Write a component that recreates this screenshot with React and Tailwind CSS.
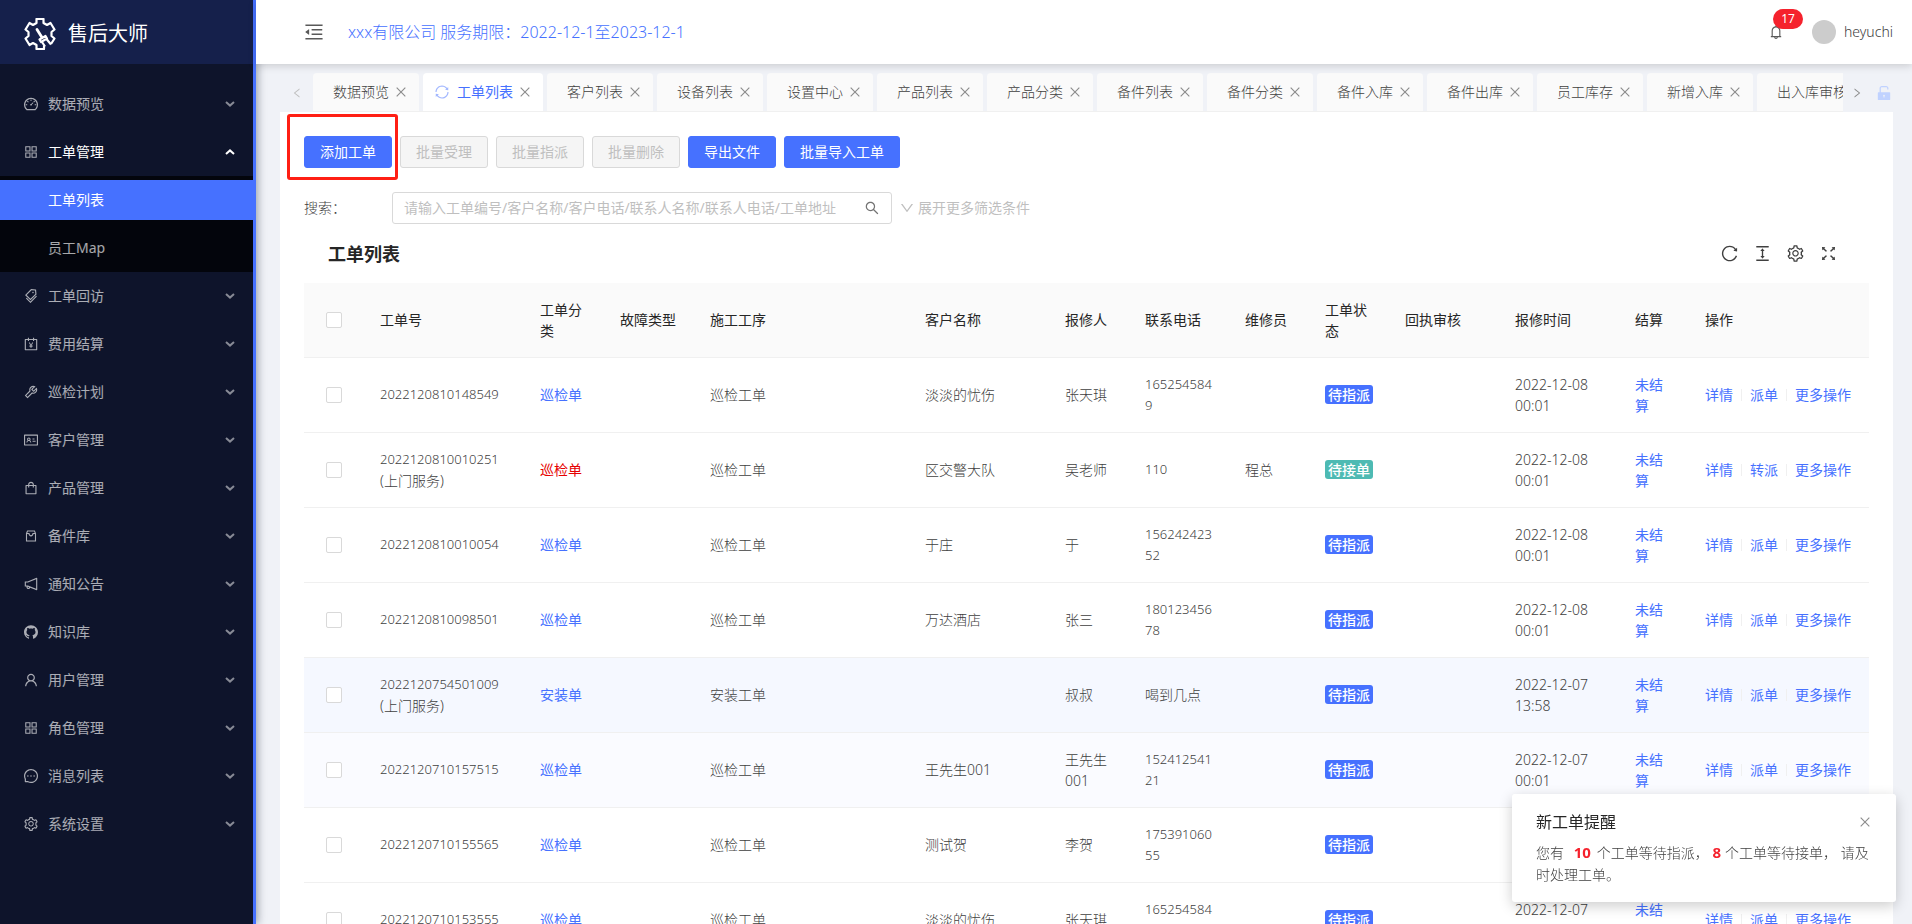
import {
  AiFillUnlock,
  AiOutlineAccountBook,
  AiOutlineAppstore,
  AiOutlineBell,
  AiOutlineClose,
  AiOutlineColumnHeight,
  AiOutlineDashboard,
  AiOutlineDown,
  AiOutlineFullscreen,
  AiOutlineGithub,
  AiOutlineIdcard,
  AiOutlineLeft,
  AiOutlineMenuFold,
  AiOutlineMessage,
  AiOutlineNotification,
  AiOutlineReload,
  AiOutlineRight,
  AiOutlineSearch,
  AiOutlineSetting,
  AiOutlineShopping,
  AiOutlineSync,
  AiOutlineTags,
  AiOutlineTool,
  AiOutlineUser,
} from "react-icons/ai";

function PartsIcon({ className }) {
  return (
    <svg
      viewBox="0 0 16 16"
      className={className}
      fill="none"
      stroke="currentColor"
      strokeWidth="1.1"
    >
      <path d="M3.5 5.5 L4.5 3 H11.5 L12.5 5.5 V13 H3.5 Z M3.5 5.5 H6 C6.3 8.6 9.7 8.6 10 5.5 H12.5" />
    </svg>
  );
}

const menus = [
  { label: "数据预览", Icon: AiOutlineDashboard },
  {
    label: "工单管理",
    Icon: AiOutlineAppstore,
    open: true,
    children: [{ label: "工单列表", active: true }, { label: "员工Map" }],
  },
  { label: "工单回访", Icon: AiOutlineTags },
  { label: "费用结算", Icon: AiOutlineAccountBook },
  { label: "巡检计划", Icon: AiOutlineTool },
  { label: "客户管理", Icon: AiOutlineIdcard },
  { label: "产品管理", Icon: AiOutlineShopping },
  { label: "备件库", Icon: PartsIcon },
  { label: "通知公告", Icon: AiOutlineNotification },
  { label: "知识库", Icon: AiOutlineGithub },
  { label: "用户管理", Icon: AiOutlineUser },
  { label: "角色管理", Icon: AiOutlineAppstore },
  { label: "消息列表", Icon: AiOutlineMessage },
  { label: "系统设置", Icon: AiOutlineSetting },
];

const tabs = [
  "数据预览",
  "工单列表",
  "客户列表",
  "设备列表",
  "设置中心",
  "产品列表",
  "产品分类",
  "备件列表",
  "备件分类",
  "备件入库",
  "备件出库",
  "员工库存",
  "新增入库",
  "出入库审核",
];

const actions = [
  { label: "添加工单", primary: true, marked: true },
  { label: "批量受理" },
  { label: "批量指派" },
  { label: "批量删除" },
  { label: "导出文件", primary: true },
  { label: "批量导入工单", primary: true },
];

const columns = [
  { title: "工单号", width: "w-[160px]" },
  { title: "工单分类", width: "w-[80px]" },
  { title: "故障类型", width: "w-[90px]" },
  { title: "施工工序", width: "" },
  { title: "客户名称", width: "w-[140px]" },
  { title: "报修人", width: "w-[80px]" },
  { title: "联系电话", width: "w-[100px]" },
  { title: "维修员", width: "w-[80px]" },
  { title: "工单状态", width: "w-[80px]" },
  { title: "回执审核", width: "w-[110px]" },
  { title: "报修时间", width: "w-[120px]" },
  { title: "结算", width: "w-[70px]" },
  { title: "操作", width: "w-[180px]" },
];

const orders = [
  {
    no: "2022120810148549",
    type: "巡检单",
    process: "巡检工单",
    customer: "淡淡的忧伤",
    reporter: "张天琪",
    phone: "1652545849",
    time: "2022-12-08 00:01",
  },
  {
    no: "2022120810010251",
    onSite: true,
    type: "巡检单",
    urgent: true,
    process: "巡检工单",
    customer: "区交警大队",
    reporter: "吴老师",
    phone: "110",
    worker: "程总",
    accepted: true,
    time: "2022-12-08 00:01",
  },
  {
    no: "2022120810010054",
    type: "巡检单",
    process: "巡检工单",
    customer: "于庄",
    reporter: "于",
    phone: "15624242352",
    time: "2022-12-08 00:01",
  },
  {
    no: "2022120810098501",
    type: "巡检单",
    process: "巡检工单",
    customer: "万达酒店",
    reporter: "张三",
    phone: "18012345678",
    time: "2022-12-08 00:01",
  },
  {
    no: "2022120754501009",
    onSite: true,
    type: "安装单",
    process: "安装工单",
    customer: "",
    reporter: "叔叔",
    phone: "喝到几点",
    time: "2022-12-07 13:58",
    rowClass: "bg-[#f5f8ff]",
  },
  {
    no: "2022120710157515",
    type: "巡检单",
    process: "巡检工单",
    customer: "王先生001",
    reporter: "王先生001",
    phone: "15241254121",
    time: "2022-12-07 00:01",
    rowClass: "bg-[#fafbff]",
  },
  {
    no: "2022120710155565",
    type: "巡检单",
    process: "巡检工单",
    customer: "测试贺",
    reporter: "李贺",
    phone: "17539106055",
    time: "2022-12-07 00:01",
  },
  {
    no: "2022120710153555",
    type: "巡检单",
    process: "巡检工单",
    customer: "淡淡的忧伤",
    reporter: "张天琪",
    phone: "1652545849",
    time: "2022-12-07 00:01",
  },
];

function Logo() {
  return (
    <svg
      viewBox="0 0 32 32"
      className="w-8 h-8"
      fill="none"
      stroke="white"
      strokeWidth="2.2"
      strokeLinejoin="round"
    >
      <path d="M20 27.5 V31 H12.5 V27 L9 25 L5.5 27 L1.5 20.5 L4.5 18 V14 L1.5 11.5 L5.5 5 L9 7 L12.5 5 V1 H19.5 V5 L23 7 L26.5 5 L30.5 11.5 L27.5 14 V18 L30.5 20.5 L27 26" />
      <path d="M13 11.5 L18 19.5" strokeWidth="2.8" strokeLinecap="round" />
      <path d="M15.5 21.5 L21.5 18 L23 20.5 L17 24 Z" />
      <path d="M22.5 21 L27 26.5 M18 24 L21 28.5" />
    </svg>
  );
}

function Chevron({ open }) {
  return (
    <svg
      viewBox="0 0 10 6"
      className={`w-2.5 h-1.5 ${open ? "text-white" : "text-white/50"}`}
      fill="none"
      stroke="currentColor"
      strokeWidth="2"
    >
      <path d={open ? "M1 5 L5 1.4 L9 5" : "M1 1 L5 4.6 L9 1"} />
    </svg>
  );
}

function Sidebar() {
  return (
    <aside className="relative z-10 w-64 shrink-0 bg-[#0e142b] border-r-[3px] border-[#4671ff] font-normal shadow-[2px_0_8px_rgba(0,21,41,0.35)]">
      <div className="flex items-center gap-3 h-16 pl-6 pt-1 bg-[#15204b]">
        <Logo />
        <span className="text-xl text-white">售后大师</span>
      </div>

      <nav className="pt-4 text-white/65">
        {menus.map(({ label, Icon, open, children }) => (
          <div key={label}>
            <button
              className={`flex items-center w-full h-12 pl-[23px] pr-[18px] ${open ? "text-white" : ""}`}
            >
              <Icon className="w-4 h-4 mr-[9px] text-white/65" />
              <span className="flex-1 text-left">{label}</span>
              <Chevron open={open} />
            </button>
            {children && (
              <div className="bg-[#03050c]">
                {children.map((child) => (
                  <div key={child.label} className="py-1">
                    <a
                      href="#"
                      className={`flex items-center h-10 pl-12 ${child.active ? "bg-[#4671ff] text-white" : ""}`}
                    >
                      {child.label}
                    </a>
                  </div>
                ))}
              </div>
            )}
          </div>
        ))}
      </nav>
    </aside>
  );
}

function Header() {
  return (
    <header className="relative z-20 flex items-center h-16 shrink-0 pl-[47px] pr-[19px] bg-white shadow-[0_2px_8px_rgba(0,0,0,0.16)]">
      <button aria-label="折叠菜单" className="text-[#595959]">
        <AiOutlineMenuFold className="w-[22px] h-[22px]" />
      </button>
      <div className="flex-1 ml-[23px] text-base text-[#4671ff]">
        xxx有限公司 服务期限：2022-12-1至2023-12-1
      </div>
      <button aria-label="通知" className="relative text-[#595959]">
        <AiOutlineBell className="w-4 h-4" />
        <span className="absolute -top-[15px] left-[5px] w-[30px] h-5 leading-5 text-center text-xs font-normal text-white bg-[#f5222d] rounded-full">
          17
        </span>
      </button>
      <span className="w-6 h-6 ml-7 mr-2 rounded-full bg-[#ccc]" />
      <span className="text-sm text-[#404040]">heyuchi</span>
    </header>
  );
}

function TabBar() {
  return (
    <div className="flex items-center pt-[9px]">
      <button
        aria-label="向左"
        className="flex justify-center w-[33px] shrink-0 text-[#bfbfbf]"
      >
        <AiOutlineLeft className="w-3 h-3" />
      </button>
      <div className="flex flex-1 gap-1 min-w-0 overflow-hidden border-b border-[#f0f0f0]">
        {tabs.map((tab) => {
          const active = tab === "工单列表";
          return (
            <div
              key={tab}
              className={`flex items-center shrink-0 h-[38px] pr-[11px] rounded-t-sm ${
                active
                  ? "pl-[11px] bg-white font-normal text-[#4671ff]"
                  : "pl-5 bg-[#fafafa]"
              }`}
            >
              {active && (
                <AiOutlineSync className="w-4 h-4 mr-[7px] text-[#a3b8ff]" />
              )}
              <button>{tab}</button>
              <button
                aria-label={`关闭${tab}`}
                className="ml-[5px] text-[#8c8c8c]"
              >
                <AiOutlineClose className="w-3.5 h-3.5" />
              </button>
            </div>
          );
        })}
      </div>
      <button
        aria-label="向右"
        className="flex justify-center w-7 shrink-0 text-[#8c8c8c]"
      >
        <AiOutlineRight className="w-3 h-3" />
      </button>
      <button
        aria-label="锁定"
        className="flex justify-end items-center w-[22px] h-9 shrink-0 text-[#c0d2ff]"
      >
        <AiFillUnlock className="w-[18px] h-[18px]" />
      </button>
    </div>
  );
}

function ActionBar() {
  return (
    <div className="flex gap-2 font-normal">
      {actions.map(({ label, primary, marked }) => (
        <div key={label} className="relative">
          <button
            disabled={!primary}
            className={`h-8 px-[15px] border rounded-[3px] ${
              primary
                ? "bg-[#4671ff] border-[#4671ff] text-white"
                : "bg-[#f5f5f5] border-[#d9d9d9] text-[#bfbfbf]"
            }`}
          >
            {label}
          </button>
          {marked && (
            <div className="absolute -left-[17px] -top-[22px] w-[111px] h-[66px] z-10 border-[3px] border-[#ff1f14] rounded-[3px] pointer-events-none" />
          )}
        </div>
      ))}
    </div>
  );
}

function SearchBar() {
  return (
    <div className="flex items-center mt-6">
      <label htmlFor="keyword" className="w-22">
        搜索：
      </label>
      <div className="flex items-center w-[500px] h-8 px-[11px] border border-[#d9d9d9] rounded-[3px]">
        <input
          id="keyword"
          type="text"
          placeholder="请输入工单编号/客户名称/客户电话/联系人名称/联系人电话/工单地址"
          className="flex-1 min-w-0 outline-none placeholder:font-normal placeholder:text-[#bfbfbf]"
        />
        <button aria-label="搜索" className="text-[#737373]">
          <AiOutlineSearch className="w-4 h-4" />
        </button>
      </div>
      <button className="flex items-center gap-[3px] ml-[7px] font-normal text-[#bfbfbf]">
        <AiOutlineDown className="w-4 h-4" />
        展开更多筛选条件
      </button>
    </div>
  );
}

function Checkbox({ label }) {
  return (
    <input
      type="checkbox"
      aria-label={label}
      className="block w-4 h-4 appearance-none bg-white border border-[#d9d9d9] rounded-[2px]"
    />
  );
}

function OrderRow({ order }) {
  return (
    <tr className={`h-[75px] border-b border-[#f0f0f0] ${order.rowClass || ""}`}>
      <td className="pl-[22px]">
        <Checkbox label={order.no} />
      </td>
      <td className="px-4">
        <div className="text-[13px]">{order.no}</div>
        {order.onSite && <div>(上门服务)</div>}
      </td>
      <td className="px-4 font-normal">
        <a
          href="#"
          className={order.urgent ? "text-[#e60000]" : "text-[#4671ff]"}
        >
          {order.type}
        </a>
      </td>
      <td className="px-4" />
      <td className="px-4">{order.process}</td>
      <td className="px-4">{order.customer}</td>
      <td className="px-4">{order.reporter}</td>
      <td className={/\d/.test(order.phone) ? "px-4 text-[13px]" : "px-4"}>
        {order.phone}
      </td>
      <td className="px-4">{order.worker}</td>
      <td className="px-4">
        <span
          className={`inline-block h-[19px] px-[3px] leading-[19px] font-medium text-white rounded-[3px] whitespace-nowrap ${
            order.accepted ? "bg-[#4dbab3]" : "bg-[#4671ff]"
          }`}
        >
          {order.accepted ? "待接单" : "待指派"}
        </span>
      </td>
      <td className="px-4" />
      <td className="px-4 break-normal">{order.time}</td>
      <td className="px-4 font-normal text-[#4671ff]">未结算</td>
      <td className="px-4">
        <div className="flex items-center gap-2 font-normal text-[#4671ff] whitespace-nowrap">
          <a href="#">详情</a>
          <span className="w-px h-3 bg-[#f0f0f0]" />
          <a href="#">{order.accepted ? "转派" : "派单"}</a>
          <span className="w-px h-3 bg-[#f0f0f0]" />
          <a href="#">更多操作</a>
        </div>
      </td>
    </tr>
  );
}

function OrderTable() {
  return (
    <section>
      <div className="flex items-center justify-between h-[59px] pl-6 pr-[31px]">
        <h1 className="text-lg font-bold text-[#262626]">工单列表</h1>
        <div className="flex gap-3.5">
          <button aria-label="刷新">
            <AiOutlineReload className="w-[19px] h-[19px]" />
          </button>
          <button aria-label="密度">
            <AiOutlineColumnHeight className="w-[19px] h-[19px]" />
          </button>
          <button aria-label="列设置">
            <AiOutlineSetting className="w-[19px] h-[19px]" />
          </button>
          <button aria-label="全屏">
            <AiOutlineFullscreen className="w-[19px] h-[19px]" />
          </button>
        </div>
      </div>

      <table className="w-full table-fixed leading-[21px] break-all">
        <thead>
          <tr className="h-[74px] bg-[#fafafa] border-b border-[#f0f0f0] text-left text-[#262626]">
            <th className="w-[60px] pl-[22px]">
              <Checkbox label="全选" />
            </th>
            {columns.map((col) => (
              <th key={col.title} className={`px-4 font-normal ${col.width}`}>
                {col.title}
              </th>
            ))}
          </tr>
        </thead>
        <tbody>
          {orders.map((order) => (
            <OrderRow key={order.no} order={order} />
          ))}
        </tbody>
      </table>
    </section>
  );
}

function Notice() {
  return (
    <div
      role="alert"
      className="fixed right-4 bottom-[22px] z-30 w-96 px-6 py-4 bg-white rounded-[3px] shadow-[0_4px_14px_rgba(0,0,0,0.2)]"
    >
      <div className="flex items-center justify-between mb-2 leading-[26px]">
        <span className="text-base font-normal text-[#262626]">新工单提醒</span>
        <button aria-label="关闭" className="text-[#8c8c8c]">
          <AiOutlineClose className="w-3.5 h-3.5" />
        </button>
      </div>
      <p className="leading-[22px]">
        您有{" "}
        <b className="mx-1.5 text-[15px] leading-none font-bold text-[#f5222d]">
          10
        </b>
        个工单等待指派，{" "}
        <b className="mr-1 text-[15px] leading-none font-bold text-[#f5222d]">
          8
        </b>
        个工单等待接单， 请及时处理工单。
      </p>
    </div>
  );
}

export default function App() {
  return (
    <div className="flex h-screen overflow-hidden bg-[#f0f2f7] text-sm font-light text-[#404040] font-['Noto_Sans','Noto_Sans_CJK_SC',sans-serif]">
      <Sidebar />
      <div className="flex flex-col flex-1 min-w-0">
        <Header />
        <main className="flex-1 min-h-0 overflow-hidden pl-6 pr-[19px]">
          <TabBar />
          <div className="px-6 pt-6 bg-white">
            <ActionBar />
            <SearchBar />
            <OrderTable />
          </div>
        </main>
      </div>
      <Notice />
    </div>
  );
}
